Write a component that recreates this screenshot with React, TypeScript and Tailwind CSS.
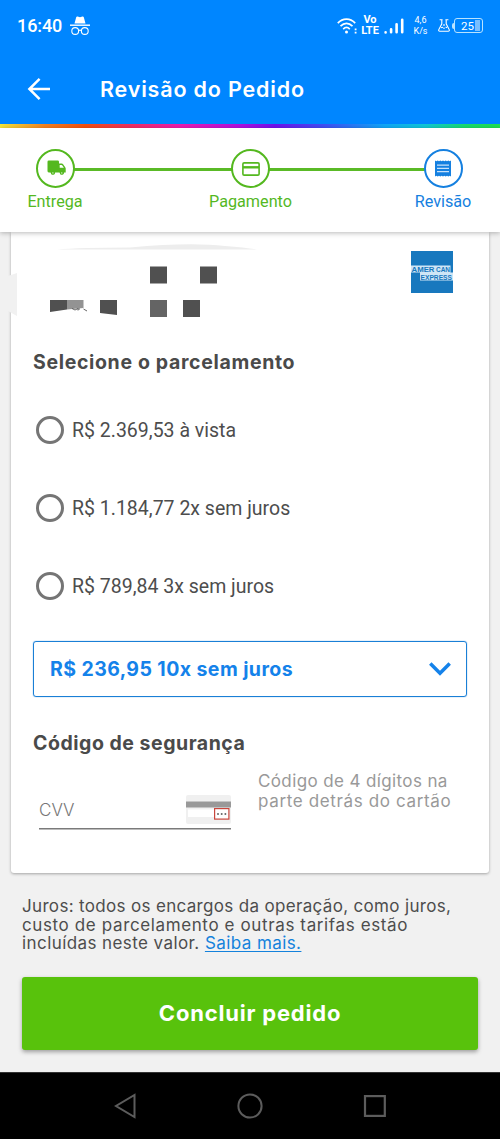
import type { ReactNode } from 'react'

const installments = ['R$ 2.369,53 à vista', 'R$ 1.184,77 2x sem juros', 'R$ 789,84 3x sem juros']

function StatusBar() {
  return (
    <div className="flex h-[50px] items-center pl-[17px] pt-px text-white">
      <span className="w-[45px] whitespace-nowrap text-[18px] font-medium leading-[50px] tracking-[-0.1px]">16:40</span>
      {/* incognito */}
      <svg className="ml-2 h-5 w-5 shrink-0" viewBox="0 0 20 20" fill="none">
        <path d="M4.5 7.5 6.2 1.3C6.4.6 7 .4 7.6.6l2.4.7 2.4-.7c.6-.2 1.2 0 1.4.7l1.7 6.2z" fill="currentColor" />
        <path d="M0 9.2h20" stroke="currentColor" strokeWidth="1.4" />
        <circle cx="5.2" cy="15" r="3.4" stroke="currentColor" strokeWidth="1.1" />
        <circle cx="14.8" cy="15" r="3.4" stroke="currentColor" strokeWidth="1.1" />
        <path d="M8.6 14.6q1.4-1 2.8 0" stroke="currentColor" strokeWidth="1.1" />
      </svg>

      {/* wifi */}
      <svg className="ml-auto h-[18px] w-[21px] shrink-0" viewBox="0 0 21 18" fill="none" stroke="currentColor" strokeWidth="1.7">
        <path d="M.8 6.2C5.8.8 13.2.8 18.2 6.2M3.5 9.2c3.7-3.8 8.3-3.8 12 0M6.2 12.1c2-2 4.6-2 6.6 0" />
        <circle cx="9.5" cy="15" r="1.5" fill="currentColor" stroke="none" />
        <path d="M18.6 11.5v1.8M18.6 14.7v1.8" strokeWidth="1.8" />
      </svg>
      <div className="ml-[3px] w-[18px] text-center text-[11px] font-bold leading-[10.5px]">
        <div>Vo</div>
        <div>LTE</div>
      </div>
      <svg className="ml-[5px] h-4 w-5 shrink-0" viewBox="0 0 20 16" stroke="currentColor" strokeWidth="2.6" strokeLinecap="round">
        <path d="M1.6 14.4v0M7.1 14.2v-3M12.6 14.2V6.2M18.2 14.2V1.8" />
      </svg>
      <div className="ml-[9px] w-[15px] text-center text-[9px] leading-[11px]">
        <div>4,6</div>
        <div>K/s</div>
      </div>
      {/* flask */}
      <svg className="ml-[10px] h-[13px] w-3 shrink-0" viewBox="0 0 12 13" fill="none" stroke="currentColor" strokeWidth="1.1">
        <path d="M1.6.8h3M7.4.8h3M3.8.8v4L.8 10.6q-.5 1.4 1 1.6h8.4q1.5-.2 1-1.6L8.2 4.8v-4M3 8.8l2-.6M9 8.8 7.6 8M6 5v2M6 8.5v1.5" />
      </svg>
      <div className="ml-[2px] mr-[17px] flex items-center">
        <div className="h-[6px] w-[2px] rounded-l bg-[#b9e3ff]" />
        <div className="flex h-[15px] w-[29px] items-center rounded-[3px] border-[1.5px] border-[#b9e3ff] pl-[6px]">
          <span className="w-[14px] text-[11.5px] leading-[12px]">25</span>
          <div className="h-[11px] w-[5px] bg-[#79bfff]" />
        </div>
      </div>
    </div>
  )
}

function Header() {
  return (
    <div className="h-[124px] bg-[#0086ff]">
      <StatusBar />
      <div className="flex h-[78px] items-center pl-[27px] text-white">
        <svg className="h-[22px] w-6" viewBox="0 0 24 22" fill="none" stroke="currentColor" strokeWidth="2.5">
          <path d="M12.6.9 2.4 11l10.2 10.1M2.4 11H23" />
        </svg>
        <h1 className="ml-[49px] whitespace-nowrap font-['Inter','Noto_Sans',sans-serif] text-[21.5px] font-semibold tracking-[0.82px]">
          Revisão do Pedido
        </h1>
      </div>
    </div>
  )
}

function Step({ label, color, children }: { label: string; color: string; children: ReactNode }) {
  return (
    <div className={`flex w-[96px] flex-col items-center ${color}`}>
      <div className="relative z-10 flex h-[39px] w-[39px] items-center justify-center rounded-full border-2 border-current bg-white">
        {children}
      </div>
      <span className="mt-1 text-[16.2px] leading-5">{label}</span>
    </div>
  )
}

function Stepper() {
  return (
    <div className="relative z-20 h-[104px] bg-white pl-[7px] pr-[9px] pt-[21px] shadow-[0_1px_5px_rgba(0,0,0,0.28)]">
      <div className="relative flex justify-between">
        {/* progress line behind the circles */}
        <div className="absolute left-12 right-12 top-[19px] h-[3px] bg-[#5aba26]" />
        <Step label="Entrega" color="text-[#54b81f]">
          <svg className="h-[16px] w-[19px] translate-x-px -translate-y-px" viewBox="0 0 19 16" fill="currentColor">
            <path d="M1.8.5h8.9q1.3 0 1.3 1.3v1.7h2.8q.8 0 1.3.7l2.1 3q.5.6.5 1.4v3.8h-1.5a2.4 2.4 0 0 1-4.7 0H8.2a2.4 2.4 0 0 1-4.7 0H1.8Q.5 12.4.5 11.1V1.8Q.5.5 1.8.5z" />
            <path d="M12.7 4.9v2.9h4.2l-1.8-2.5q-.3-.4-.8-.4z" fill="white" />
            <circle cx="5.9" cy="12.9" r="1.9" />
            <circle cx="14.8" cy="12.9" r="1.9" />
            <circle cx="5.9" cy="12.9" r=".6" fill="white" />
            <circle cx="14.8" cy="12.9" r=".6" fill="white" />
          </svg>
        </Step>
        <div className="pl-[3px]">
          <Step label="Pagamento" color="text-[#54b81f]">
            <svg className="h-[14px] w-[18px]" viewBox="0 0 18 14" fill="none" stroke="currentColor" strokeWidth="1.6">
              <rect x=".9" y=".9" width="16.2" height="12.2" rx="1.2" />
              <path d="M1 5.3h16" strokeWidth="2.4" />
            </svg>
          </Step>
        </div>
        <Step label="Revisão" color="text-[#1580e0]">
          <svg className="h-[17px] w-4" viewBox="0 0 16 17">
            <path d="M0 .5l1.3.7L2.7.5l1.3.7 1.3-.7 1.4.7L8 .5l1.3.7 1.4-.7 1.3.7 1.3-.7 1.4.7L16 .5v16l-1.3-.7-1.4.7-1.3-.7-1.3.7-1.4-.7-1.3.7-1.3-.7-1.4.7-1.3-.7-1.3.7-1.4-.7-1.3.7z" fill="currentColor" />
            <path d="M2 5.2h12M2 8.4h12M2 11.6h12" stroke="#c9e2fa" strokeWidth="1.3" />
          </svg>
        </Step>
      </div>
    </div>
  )
}

function AmexLogo() {
  return (
    <svg className="h-[42px] w-[42px]" viewBox="0 0 42 42">
      <rect width="42" height="42" fill="#1878be" />
      <path d="M0 14.5h39.5v7H42v8H9v-8H0z" fill="#cfe6f6" />
      <g fontFamily="'Liberation Sans', Arial, sans-serif" fontWeight="700" fontSize="7.5" fill="#1878be">
        <text x=".5" y="20.6" textLength="23" lengthAdjust="spacingAndGlyphs">AMER</text>
        <text x="25" y="20.6" textLength="14" lengthAdjust="spacingAndGlyphs">CAN</text>
        <text x="9.5" y="28.6" textLength="31.5" lengthAdjust="spacingAndGlyphs">EXPRESS</text>
      </g>
    </svg>
  )
}

// Card owner data, hidden behind blocks
function MaskedCard() {
  return (
    <svg className="absolute left-[-11px] top-0 h-[100px] w-[270px]" viewBox="0 0 270 100">
      <path d="M57 17.5Q80 15.5 130 15.5Q190 10 225 14Q245 15.5 257 17.5z" fill="#ededed" />
      <path d="M8 44l9-3v43l-9-5z" fill="#f1f1f1" />
      <g fill="#505050">
        <path d="M150 34.5h17v17h-17zM200 34.5h17v17h-17zM183 68h17v17h-17z" />
        <path d="M50 68h17v9.5L50 80z" />
        <path d="M100 68h17v15l-17-2z" />
      </g>
      <path d="M150 68h17v17h-17z" fill="#646464" />
      <path d="M67 68h16.5v8l-16.5 1.5z" fill="#939393" />
      <path d="M72 76.5q3 3 6 0v2M79 78v-2M83.5 77l3.5 2" fill="none" stroke="#555" strokeWidth=".9" />
    </svg>
  )
}

function CvvCardIcon() {
  return (
    <svg className="mt-px h-[29px] w-[45px]" viewBox="0 0 45 29">
      <rect width="45" height="29" rx="2" fill="#f0f0f0" />
      <rect y="6.5" width="45" height="6" fill="#999" />
      <rect x="2" y="14.5" width="26" height="7.5" fill="#fff" />
      <rect x="28.6" y="13.6" width="14.3" height="10.5" fill="#fff" stroke="#c9463d" strokeWidth="1.2" />
      <g fill="#666">
        <circle cx="32" cy="19" r="1" />
        <circle cx="35.7" cy="19" r="1" />
        <circle cx="39.4" cy="19" r="1" />
      </g>
    </svg>
  )
}

function PaymentCard() {
  return (
    <div className="relative mx-[11px] h-[641px] rounded-b-[3px] bg-white px-[22px] shadow-[0_1px_3px_rgba(0,0,0,0.32)]">
      <MaskedCard />
      <div className="flex h-[112px] justify-end pr-[14px] pt-[19px]">
        <AmexLogo />
      </div>

      <h2 className="h-9 whitespace-nowrap font-['Inter','Noto_Sans',sans-serif] text-[19.5px] font-bold leading-9 tracking-[0.66px] text-[#4a4a4a]">
        Selecione o parcelamento
      </h2>
      <div className="mt-[11px] flex flex-col">
        {installments.map((text) => (
          <label key={text} className="flex h-[78px] items-center pl-[3px] text-[19.5px] text-[#4d4d4d]">
            <span className="h-[28px] w-[28px] rounded-full border-[3px] border-[#757575]" />
            <span className="ml-2 mt-px whitespace-nowrap">{text}</span>
          </label>
        ))}
      </div>

      <div className="mt-4 flex h-[56px] w-[434px] items-center justify-between rounded-[3px] border-[1.5px] border-[#1a7fd6] pl-4 pr-[15px] text-[#1482ea] shadow-[0_0_1px_#1a7fd6]">
        <span className="whitespace-nowrap pt-0.5 font-['Inter','Noto_Sans',sans-serif] text-[19.5px] font-bold tracking-[0.42px]">
          R$ 236,95 10x sem juros
        </span>
        <svg className="h-[14px] w-[22px]" viewBox="0 0 22 14" fill="none" stroke="currentColor" strokeWidth="3.5">
          <path d="M1.3 1.5 11 11.2l9.7-9.7" />
        </svg>
      </div>

      <h2 className="mt-[28px] h-9 whitespace-nowrap font-['Inter','Noto_Sans',sans-serif] text-[19.5px] font-bold leading-9 tracking-[0.52px] text-[#4a4a4a]">
        Código de segurança
      </h2>
      <div className="mt-[11px] flex">
        <div className="ml-[6px] mt-[22px] flex h-[35px] w-[192px] items-start justify-between border-b-[1.5px] border-[#7a7a7a] shadow-[0_1px_0_#bbb]">
          <span className="font-['Inter','Noto_Sans',sans-serif] text-[17px] font-light leading-[32px] text-[#777]">CVV</span>
          <CvvCardIcon />
        </div>
        <p className="ml-[27px] whitespace-nowrap font-['Inter','Noto_Sans',sans-serif] text-[17px] leading-[19.5px] text-[#999]">
          <span className="block tracking-[0.38px]">Código de 4 dígitos na</span>
          <span className="block tracking-[0.64px]">parte detrás do cartão</span>
        </p>
      </div>
    </div>
  )
}

function NavBar() {
  return (
    <div className="flex h-[67px] items-center justify-between border-t border-[#333] bg-black px-[113px] text-[#5c5c5c]">
      <svg className="h-[26px] w-6" viewBox="0 0 24 26" fill="none" stroke="currentColor" strokeWidth="2">
        <path d="M21.5 2v22L3 13z" />
      </svg>
      <svg className="h-[26px] w-[26px]" viewBox="0 0 26 26" fill="none" stroke="currentColor" strokeWidth="2">
        <circle cx="13" cy="13" r="11.6" />
      </svg>
      <svg className="h-[22px] w-6" viewBox="0 0 24 22" fill="none" stroke="currentColor" strokeWidth="2.2">
        <rect x="2" y="1.1" width="19.8" height="19.8" />
      </svg>
    </div>
  )
}

export default function App() {
  return (
    <div className="flex h-[1139px] w-[500px] flex-col overflow-hidden bg-[#f1f1f1] font-['Roboto','Liberation_Sans',sans-serif]">
      <Header />
      {/* rainbow strip */}
      <div className="h-1 bg-[linear-gradient(90deg,#f5e83b_0%,#f58220_9%,#f5500f_17%,#f03060_26%,#ee1cb0_36%,#b010e0_48%,#7010ee_55%,#4050f5_65%,#10a8f8_77%,#10c8d8_85%,#18dc70_93%,#20e050_100%)]" />
      <Stepper />
      <PaymentCard />
      <p className="ml-[22px] mt-6 h-14 whitespace-nowrap font-['Inter','Noto_Sans',sans-serif] text-[17px] leading-[18.6px] text-[#4d4d4d]">
        <span className="block tracking-[0.33px]">Juros: todos os encargos da operação, como juros,</span>
        <span className="block tracking-[0.62px]">custo de parcelamento e outras tarifas estão</span>
        <span className="block tracking-[0.42px]">
          incluídas neste valor. <a className="text-[#1482dc] underline decoration-1 underline-offset-2">Saiba mais.</a>
        </span>
      </p>
      <button className="mx-[22px] mb-[22px] mt-[24px] h-[73px] rounded-[3px] bg-[#58c20c] font-['Inter','Noto_Sans',sans-serif] text-[22px] font-bold tracking-[0.8px] text-white shadow-[0_2px_4px_rgba(0,0,0,0.35)]">
        Concluir pedido
      </button>
      <NavBar />
    </div>
  )
}
